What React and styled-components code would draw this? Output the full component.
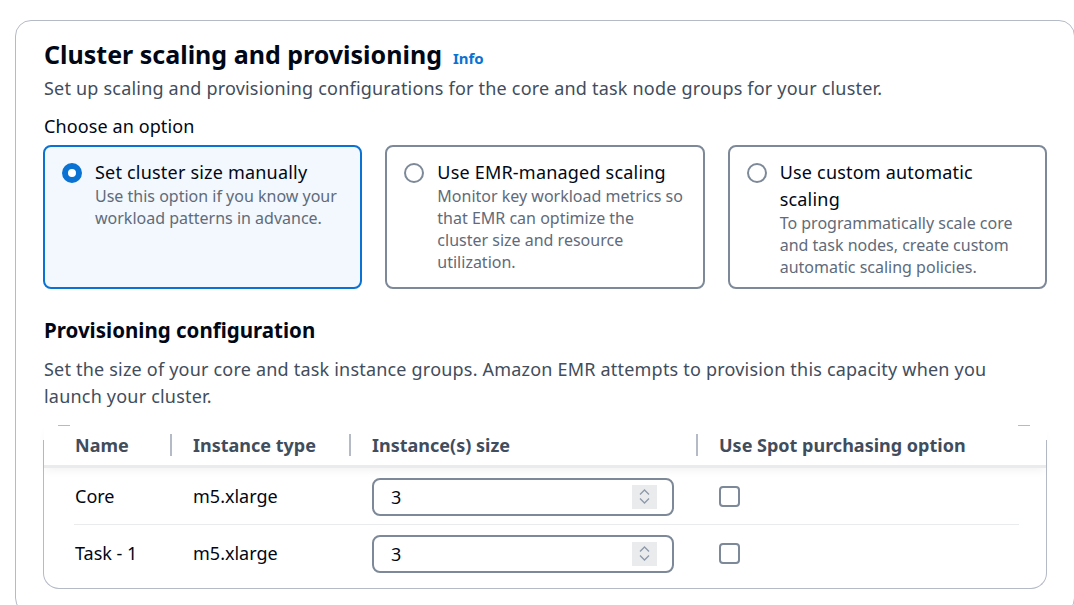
import React from "react";
import styled, { createGlobalStyle, css } from "styled-components";

const GlobalStyle = createGlobalStyle`
  html, body {
    margin: 0;
    padding: 0;
    background: #ffffff;
    overflow: hidden;
  }
  body {
    font-family: "Noto Sans", "Open Sans", sans-serif;
    color: #000716;
    -webkit-font-smoothing: antialiased;
  }
`;

const Container = styled.section`
  box-sizing: border-box;
  width: 1060px;
  height: 594px;
  margin: 20px 0 0 15px;
  padding: 18px 27px 0 27px;
  border: 1px solid #b4bac6;
  border-radius: 16px;
`;

const HeadingRow = styled.div`
  display: flex;
  align-items: baseline;
  gap: 11px;
  padding-left: 1px;
`;

const Title = styled.h2`
  margin: 0;
  font-size: 25px;
  line-height: 30px;
  font-weight: 700;
  color: #000716;
`;

const InfoLink = styled.a`
  font-size: 15px;
  font-weight: 700;
  color: #0972d3;
  text-decoration: none;
`;

const Description = styled.p`
  margin: ${(p) => p.$mt || "6px"} 0 0 1px;
  font-size: 18px;
  line-height: 27px;
  letter-spacing: 0.2px;
  color: #414d5c;
`;

const Label = styled.div`
  margin: 11px 0 5px 1px;
  font-size: 18px;
  line-height: 27px;
  letter-spacing: 0.1px;
  color: #000716;
`;

const Tiles = styled.div`
  display: grid;
  grid-template-columns: repeat(3, 1fr);
  gap: 23px;
`;

const Tile = styled.label`
  box-sizing: border-box;
  display: flex;
  gap: 13px;
  padding: 12px 14px 7px 17px;
  border: 2px solid #7d8998;
  border-radius: 8px;
  min-height: 144px;
  cursor: pointer;
  ${(p) =>
    p.$selected &&
    css`
      border-color: #0972d3;
      background: #f2f8fd;
    `}
`;

const Radio = styled.span`
  flex: none;
  box-sizing: border-box;
  width: 20px;
  height: 20px;
  margin-top: 4px;
  border-radius: 50%;
  border: 2px solid #7d8998;
  background: #ffffff;
  ${(p) =>
    p.$checked &&
    css`
      border: 6px solid #0972d3;
    `}
`;

const TileText = styled.div`
  display: flex;
  flex-direction: column;
`;

const TileTitle = styled.span`
  font-size: 18px;
  line-height: 27px;
  letter-spacing: 0.2px;
  color: #000716;
`;

const TileDesc = styled.span`
  margin-top: -1px;
  font-size: 16px;
  line-height: 22px;
  color: #5f6b7a;
`;

const SubHeading = styled.h3`
  margin: 28px 0 0 1px;
  font-size: 20.5px;
  line-height: 26px;
  font-weight: 700;
  color: #000716;
`;

const TableWrap = styled.div`
  position: relative;
  margin-top: 15px;
  border: 1px solid #b4bac6;
  border-top: none;
  border-radius: 0 0 16px 16px;
  padding-bottom: 7px;

  &::before,
  &::after {
    content: "";
    position: absolute;
    top: 0;
    width: 2px;
    height: 15px;
    background: #ffffff;
  }
  &::before {
    left: -1px;
  }
  &::after {
    right: -1px;
  }
`;

const cols = "96px 179px 347px 1fr";

const HeaderRow = styled.div`
  position: relative;
  display: grid;
  grid-template-columns: ${cols};
  height: 40px;
  align-items: center;
  padding: 0 27px 0 30px;
  border-bottom: 3px solid #e9ebed;
  box-shadow: 0 5px 8px -2px rgba(0, 7, 22, 0.05);

  &::before,
  &::after {
    content: "";
    position: absolute;
    top: 0;
    width: 12px;
    height: 1px;
    background: #b4bac6;
  }
  &::before {
    left: 14px;
  }
  &::after {
    right: 16px;
  }
`;

const HeaderCell = styled.div`
  position: relative;
  font-size: 18px;
  font-weight: 700;
  color: #414d5c;
  white-space: nowrap;
  padding-left: ${(p) => (p.$first ? "1px" : "23px")};
  ${(p) =>
    !p.$first &&
    css`
      &::before {
        content: "";
        position: absolute;
        left: 0;
        top: 50%;
        width: 2px;
        height: 22px;
        margin-top: -11px;
        background: #b4bac6;
      }
    `}
`;

const Row = styled.div`
  display: grid;
  grid-template-columns: ${cols};
  align-items: center;
  height: 56px;
  margin: 0 27px 0 30px;
  border-bottom: ${(p) => (p.$last ? "none" : "1px solid #e9ebed")};
`;

const Cell = styled.div`
  font-size: 18px;
  color: #000716;
  white-space: nowrap;
  padding-left: ${(p) => (p.$first ? "1px" : "23px")};
  padding-right: ${(p) => (p.$input ? "22px" : "0")};
  display: flex;
  align-items: center;
`;

const NumberBox = styled.div`
  box-sizing: border-box;
  width: 100%;
  height: 38px;
  margin-top: 1px;
  border: 2px solid #7d8998;
  border-radius: 8px;
  display: flex;
  align-items: center;
  padding: 0 15px 0 17px;
  background: #ffffff;
`;

const NumberValue = styled.span`
  flex: 1;
  font-size: 18px;
  color: #000716;
`;

const Spinner = styled.span`
  width: 25px;
  height: 24px;
  background: #e9ebed;
  display: flex;
  flex-direction: column;
  align-items: center;
  justify-content: center;
  gap: 3px;
`;

const Checkbox = styled.span`
  box-sizing: border-box;
  width: 21px;
  height: 21px;
  margin-top: 1px;
  border: 2px solid #7d8998;
  border-radius: 4px;
  background: #ffffff;
`;

const Chevron = ({ up }) => (
  <svg width="11" height="6" viewBox="0 0 11 6" fill="none">
    <path
      d={up ? "M1 5.5 L5.5 1 L10 5.5" : "M1 0.5 L5.5 5 L10 0.5"}
      stroke="#8d99a8"
      strokeWidth="1.3"
    />
  </svg>
);

const tiles = [
  {
    title: "Set cluster size manually",
    desc: "Use this option if you know your workload patterns in advance.",
    selected: true,
  },
  {
    title: "Use EMR-managed scaling",
    desc: "Monitor key workload metrics so that EMR can optimize the cluster size and resource utilization.",
  },
  {
    title: "Use custom automatic scaling",
    desc: "To programmatically scale core and task nodes, create custom automatic scaling policies.",
  },
];

const rows = [
  { name: "Core", type: "m5.xlarge", size: 3 },
  { name: "Task - 1", type: "m5.xlarge", size: 3 },
];

export default function App() {
  return (
    <>
      <GlobalStyle />
      <Container>
        <HeadingRow>
          <Title>Cluster scaling and provisioning</Title>
          <InfoLink href="#">Info</InfoLink>
        </HeadingRow>
        <Description>
          Set up scaling and provisioning configurations for the core and task node groups for your cluster.
        </Description>
        <Label>Choose an option</Label>
        <Tiles>
          {tiles.map((t) => (
            <Tile key={t.title} $selected={t.selected}>
              <Radio $checked={t.selected} />
              <TileText>
                <TileTitle>{t.title}</TileTitle>
                <TileDesc>{t.desc}</TileDesc>
              </TileText>
            </Tile>
          ))}
        </Tiles>
        <SubHeading>Provisioning configuration</SubHeading>
        <Description $mt="13px">
          Set the size of your core and task instance groups. Amazon EMR attempts to provision this capacity when you launch your cluster.
        </Description>
        <TableWrap>
          <HeaderRow>
            <HeaderCell $first>Name</HeaderCell>
            <HeaderCell>Instance type</HeaderCell>
            <HeaderCell>Instance(s) size</HeaderCell>
            <HeaderCell>Use Spot purchasing option</HeaderCell>
          </HeaderRow>
          {rows.map((r, i) => (
            <Row key={r.name} $last={i === rows.length - 1}>
              <Cell $first>{r.name}</Cell>
              <Cell>{r.type}</Cell>
              <Cell $input>
                <NumberBox>
                  <NumberValue>{r.size}</NumberValue>
                  <Spinner>
                    <Chevron up />
                    <Chevron />
                  </Spinner>
                </NumberBox>
              </Cell>
              <Cell>
                <Checkbox />
              </Cell>
            </Row>
          ))}
        </TableWrap>
      </Container>
    </>
  );
}
